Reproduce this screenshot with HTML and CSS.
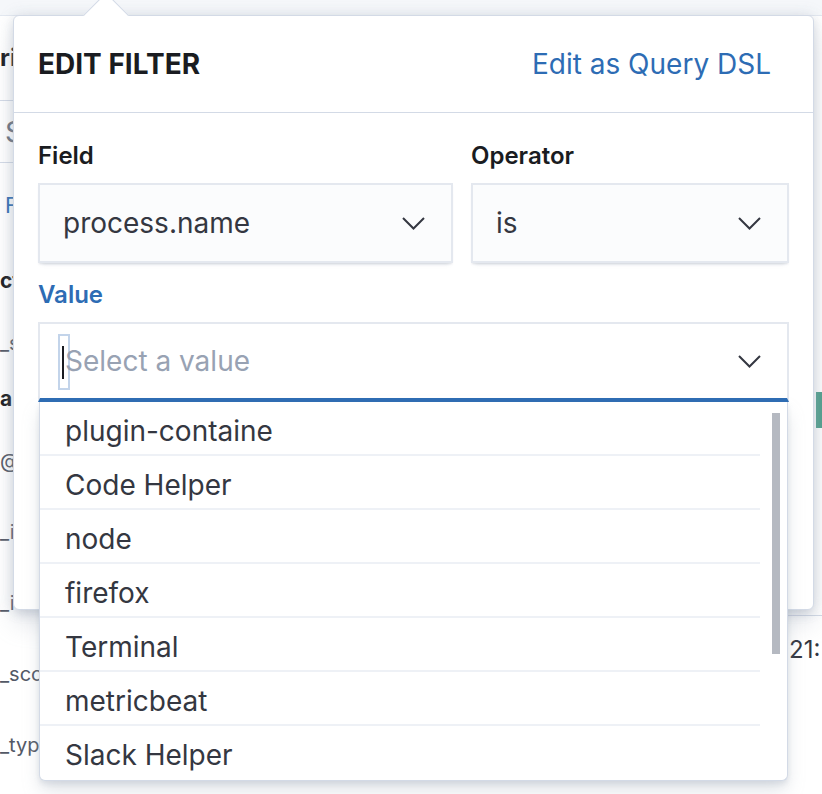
FILE: index.html
```html
<!DOCTYPE html>
<html lang="en">
<head>
<meta charset="utf-8">
<title>Edit filter</title>
<link rel="stylesheet" href="styles.css">
</head>
<body>
<div class="page">
  <div class="topband"></div>
  <div class="content">
    <aside class="sidebar">
      <div class="s-title">ri</div>
      <div class="s-search">S</div>
      <div class="s-link">F</div>
      <div class="s-heading s-h1">ct</div>
      <div class="s-field s-source">_s</div>
      <div class="s-heading s-h2">a</div>
      <div class="s-field">@</div>
      <div class="s-field">_i</div>
      <div class="s-field">_i</div>
      <div class="s-field">_sco</div>
      <div class="s-field">_typ</div>
    </aside>
    <main class="main">
      <div class="green-bar"></div>
      <div class="time-row">21:</div>
    </main>
  </div>
</div>

<div class="popover">
  <div class="arrow"></div>
  <div class="pop-header">
    <h2 class="pop-title">Edit filter</h2>
    <a class="pop-link">Edit as Query DSL</a>
  </div>
  <div class="pop-body">
    <div class="row2">
      <div class="form-row">
        <div class="label">Field</div>
        <div class="select">
          <span>process.name</span>
          <svg class="chev" width="23" height="13" viewBox="0 0 23 13"><polyline points="1,1 11.5,11.5 22,1" fill="none" stroke="#343741" stroke-width="2"/></svg>
        </div>
      </div>
      <div class="form-row">
        <div class="label">Operator</div>
        <div class="select">
          <span>is</span>
          <svg class="chev" width="23" height="13" viewBox="0 0 23 13"><polyline points="1,1 11.5,11.5 22,1" fill="none" stroke="#343741" stroke-width="2"/></svg>
        </div>
      </div>
    </div>
    <div class="form-row value-row">
      <div class="label label-focus">Value</div>
      <div class="combo">
        <div class="combo-input">
          <span class="caret-box"><span class="caret"></span></span>
          <span class="placeholder">Select a value</span>
          <svg class="chev" width="23" height="13" viewBox="0 0 23 13"><polyline points="1,1 11.5,11.5 22,1" fill="none" stroke="#343741" stroke-width="2"/></svg>
        </div>
        <div class="listbox">
          <ul class="options">
            <li class="opt">plugin-containe</li>
            <li class="opt">Code Helper</li>
            <li class="opt">node</li>
            <li class="opt">firefox</li>
            <li class="opt">Terminal</li>
            <li class="opt">metricbeat</li>
            <li class="opt">Slack Helper</li>
          </ul>
          <div class="scroll-track"><div class="scroll-thumb"></div></div>
        </div>
      </div>
    </div>
  </div>
</div>
</body>
</html>
```

FILE: styles.css
```css
* { box-sizing: border-box; margin: 0; padding: 0; }
html, body { width: 822px; height: 794px; overflow: hidden; }
body {
  font-family: Inter, "Noto Sans", "Liberation Sans", sans-serif;
  background: #fff;
  color: #343741;
  position: relative;
}

/* background page */
.topband { height: 16px; background: #f5f7fa; border-bottom: 1px solid #e3e8f0; }
.content { display: flex; }
.sidebar { width: 788px; flex: none; white-space: nowrap; overflow: hidden; }
.s-title { height: 85px; line-height: 84px; font-size: 24px; font-weight: 700; color: #1a1c21; border-bottom: 1px solid #d3dae6; }
.s-search { height: 62px; line-height: 61px; font-size: 29px; color: #69707d; padding-left: 5px; border-bottom: 1px solid #d3dae6; }
.s-link { height: 84px; line-height: 84px; font-size: 22px; color: #2d6cb4; padding-left: 5px; }
.s-heading { font-size: 21px; font-weight: 700; color: #1a1c21; }
.s-h1 { height: 68px; line-height: 68px; }
.s-h2 { height: 54px; line-height: 54px; }
.s-field { height: 71px; line-height: 71px; font-size: 20px; color: #535966; }
.s-source { height: 57px; line-height: 57px; }

.main { flex: 1; min-width: 0; white-space: nowrap; }
.green-bar { margin-top: 376px; margin-left: 28px; width: 30px; height: 36px; background: #50a08c; }
.time-row { margin-top: 187px; border-top: 1px solid #d3dae6; height: 68px; line-height: 67px; font-size: 24px; color: #343741; padding-left: 1px; }

/* popover (overlay) */
.popover {
  position: absolute;
  left: 13px;
  top: 15px;
  width: 801px;
  background: #fff;
  border: 1px solid #d3dae6;
  border-radius: 6px;
  box-shadow: 0 14px 26px -2px rgba(152,162,179,.32), 0 6px 10px -2px rgba(152,162,179,.25), 0 0 14px rgba(152,162,179,.25);
}
.arrow {
  position: absolute;
  left: 75.5px;
  top: -17px;
  width: 32px;
  height: 32px;
  background: #fff;
  border-top: 1px solid #d3dae6;
  border-left: 1px solid #d3dae6;
  transform: rotate(45deg);
}
.pop-header {
  position: relative;
  height: 97px;
  display: flex;
  align-items: center;
  justify-content: space-between;
  padding: 0 42px 0 24px;
  border-bottom: 1px solid #d3dae6;
}
.pop-title { font-size: 28px; line-height: 1; font-weight: 700; color: #1a1c21; text-transform: uppercase; }
.pop-link { font-size: 28px; line-height: 1; color: #2d6cb4; text-decoration: none; }

.pop-body { padding: 27px 24px 207px 24px; }
.row2 { display: grid; grid-template-columns: 415px 1fr; column-gap: 18px; }
.label { font-size: 24px; line-height: 32px; font-weight: 600; color: #1a1c21; margin-bottom: 11px; }
.label-focus { color: #2d6cb4; }
.value-row { margin-top: 16px; }

.select {
  height: 80px;
  background: #fbfcfd;
  border: 2px solid #e4e8ef;
  box-shadow: 0 2px 2px -1px rgba(152,162,179,.3), 0 5px 4px -4px rgba(152,162,179,.3);
  display: flex;
  align-items: center;
  justify-content: space-between;
  padding: 0 26px 0 23px;
  font-size: 28px;
  color: #343741;
}
.chev { display: block; flex: none; }

.combo { position: relative; }
.combo-input {
  height: 80px;
  background: #fff;
  border: 2px solid #e4e8ef;
  border-bottom: 4px solid #2d6cb4;
  display: flex;
  align-items: center;
  padding: 0 26px 0 18px;
  font-size: 28px;
}
.caret-box {
  flex: none;
  width: 12px;
  height: 56px;
  border: 2px solid #c3d4ea;
  display: flex;
  align-items: center;
  padding-left: 2px;
  margin-top: 2px;
}
.caret { width: 2px; height: 33px; background: #1a1c21; }
.placeholder { margin-left: -5px; color: #98a2b3; flex: 1; }

.listbox {
  position: absolute;
  top: 100%;
  left: 1px;
  right: 1px;
  height: 379px;
  background: #fff;
  border: 1px solid #d3dae6;
  border-top: none;
  border-radius: 0 0 6px 6px;
  box-shadow: 0 10px 18px -2px rgba(152,162,179,.35), 0 3px 5px rgba(152,162,179,.2);
  display: flex;
  overflow: hidden;
}
.options { list-style: none; width: 720px; flex: none; }
.opt {
  height: 54px;
  line-height: 52px;
  padding-top: 3px;
  padding-left: 25px;
  font-size: 28px;
  color: #343741;
  border-bottom: 2px solid #eef1f6;
}
.opt:last-child { border-bottom: none; }
.scroll-track { flex: 1; padding: 11px 0 0 12px; }
.scroll-thumb { width: 8px; height: 241px; background: #b5b9c1; }
```
